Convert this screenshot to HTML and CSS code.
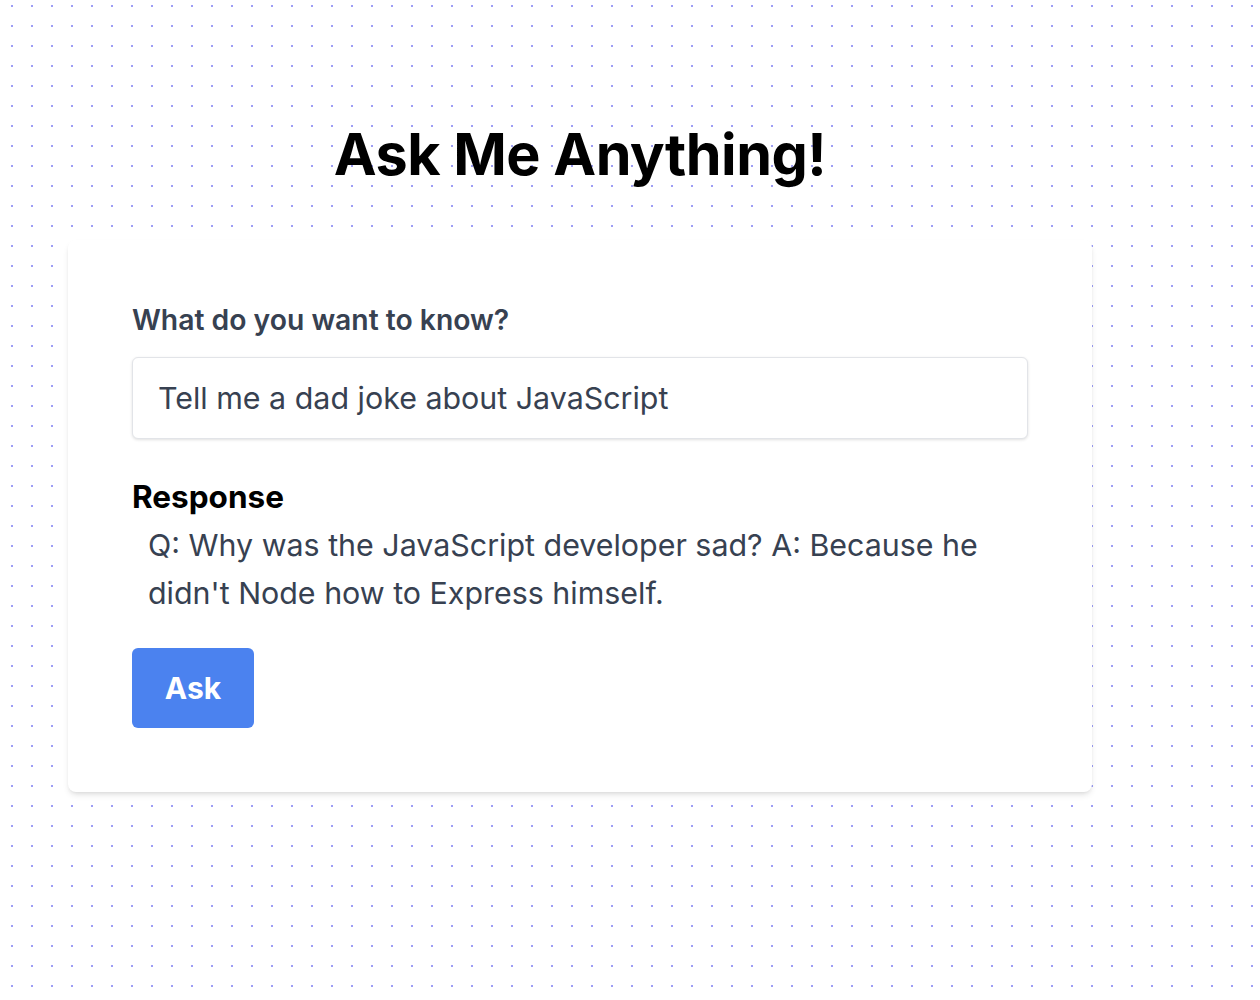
FILE: index.html
```html
<!DOCTYPE html>
<html lang="en">

<head>
    <meta charset="UTF-8" />
    <meta name="viewport" content="width=device-width, initial-scale=1.0" />
    <title>Ask Me Anything</title>

    <link rel="stylesheet" href="styles.css">
</head>

<body>
    <div class="page">
        <main class="container">
            <h1>Ask Me Anything!</h1>

            <div class="card">
                <form id="askForm">
                    <label for="question">What do you want to know?</label>
                    <input type="text" id="question" value="Tell me a dad joke about JavaScript" />

                    <h2>Response</h2>
                    <p class="response">Q: Why was the JavaScript developer sad? A: Because he didn't Node how to Express himself.</p>

                    <button type="submit" id="askBtn">Ask</button>
                </form>
            </div>
        </main>
    </div>
</body>

</html>
```

FILE: styles.css
```css
html,
body {
    margin: 0;
    min-height: 100%;
}

body {
    font-family: Inter, "Noto Sans", Arial, sans-serif;
    background-color: #fff;
    background-image: radial-gradient(circle, #9c9cf6 1.2px, transparent 1.5px);
    background-size: 20px 20px;
    background-position: 2px -4px;
    min-height: 1000px;
}

.page {
    width: 1160px;
}

.container {
    width: 1024px;
    margin: 0 auto;
    padding-top: 118px;
}

h1 {
    margin: 0 0 50px;
    text-align: center;
    font-size: 57.5px;
    font-weight: 700;
    line-height: 72px;
    letter-spacing: -0.5px;
    color: #000;
}

.card {
    background-color: #fff;
    border-radius: 8px;
    box-shadow: 0 4px 6px -1px rgba(0, 0, 0, 0.1), 0 2px 4px -2px rgba(0, 0, 0, 0.1);
    padding: 64px;
}

label {
    display: block;
    margin-bottom: 21px;
    font-size: 28.3px;
    font-weight: 600;
    line-height: 32px;
    color: #374151;
}

input[type="text"] {
    box-sizing: border-box;
    width: 896px;
    height: 82px;
    padding: 0 25px;
    border: 1px solid #e2e4e8;
    border-radius: 6px;
    box-shadow: 0 1px 3px rgba(0, 0, 0, 0.12);
    font-family: inherit;
    font-size: 30.4px;
    color: #374151;
    outline: none;
}

h2 {
    margin: 40px 0 0;
    font-size: 31.5px;
    font-weight: 700;
    line-height: 36px;
    color: #000;
}

.response {
    margin: 6px 0 31px;
    padding: 0 40px 0 16px;
    font-size: 30.4px;
    line-height: 48px;
    color: #374151;
}

button {
    background-color: #4b82ef;
    color: #fff;
    border: none;
    border-radius: 6px;
    width: 122px;
    height: 80px;
    font-family: inherit;
    font-size: 30px;
    font-weight: 700;
    cursor: pointer;
}
```
